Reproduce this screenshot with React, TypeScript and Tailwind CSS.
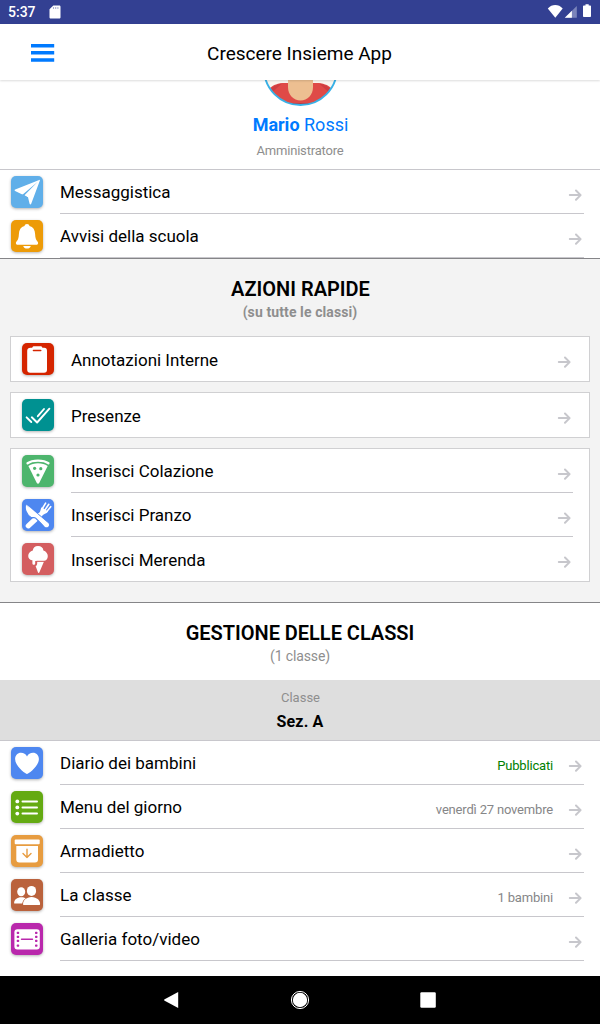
import type { ReactNode } from "react";

const W = "#fff";

const plane = (
  <>
    <path d="M28.200 3.900c.4-.2.800.1.700.6L20.200 27.800c-.4 1-1.300.9-1.600-.1L17 21.300 4.100 14.900c-.8-.4-.7-1.100.1-1.400z" fill={W} />
    <path d="M26.800 5.800 13.500 19.300l3.600 2.200-.8 2-6.300-4.300 2-1z" fill="#60afe9" />
    <path d="M27.600 5.400 14.600 19.500l3 1.800z" fill={W} />
  </>
);
const bell = (
  <>
    <path d="M16 4c1.400 0 2.300.9 2.500 2 3.700 1 5.500 3.900 5.600 8 .2 4.200.9 5.600 2 7 .9 1 1 1.500 1 2.300 0 .9-.7 1.500-1.700 1.500H6.600c-1 0-1.700-.6-1.700-1.500 0-.8.1-1.300 1-2.300 1.100-1.400 1.800-2.800 2-7 .1-4.100 1.900-7 5.600-8C13.700 4.900 14.600 4 16 4z" fill={W} />
    <path d="M12.200 26h7.600c-.4 1.700-2 2.600-3.800 2.600s-3.400-.9-3.800-2.600z" fill={W} />
  </>
);
const clipboard = (
  <>
    <path d="M8.500 4.700h1.700C10.600 3.800 11.300 3.300 12.300 3.300h6c1 0 1.700.5 2.100 1.400h1.700c2 0 2.900 1 2.900 3v19c0 2-1 3-3 3H8.200c-2 0-3-1-3-3v-19c0-2 1.300-3 3.300-3z" fill={W} />
    <path d="M11.400 7.500h7.400" stroke="#d52500" strokeWidth="1.400" strokeLinecap="round" />
  </>
);
const checks = (
  <path d="M4.600 18.300 9.300 23M9.800 18.300l5.300 5.200L27.400 9.700M15.800 17.200 22 10" fill="none" stroke={W} strokeWidth="1.900" strokeLinecap="round" strokeLinejoin="round" />
);
const pizza = (
  <>
    <path d="M5.600 8.300C8.400 6.200 12 5.600 16 5.600s7.600.6 10.400 2.700" fill="none" stroke={W} strokeWidth="2.400" strokeLinecap="round" />
    <path d="M6.400 11C9.200 9 12.200 8.200 16 8.200s6.900.8 9.700 2.800l-8.500 17c-.5 1-1.900 1-2.400 0z" fill={W} />
    <circle cx="12.600" cy="13.300" r="1.600" fill="#4db56d" />
    <circle cx="18.800" cy="13.700" r="1.600" fill="#4db56d" />
    <circle cx="16" cy="20" r="1.600" fill="#4db56d" />
  </>
);
const cutlery = (
  <>
    <path d="M17.500 16.500 6.300 26.800" stroke={W} strokeWidth="5.200" strokeLinecap="round" />
    <path d="m20.400 9.500 3.200-5.300M23 11l3.800-5.700M24.800 12.600l3.900-4.900" stroke={W} strokeWidth="1.600" strokeLinecap="round" />
    <path d="M16.500 14.500c2.400-1.500 1.600-4 3.200-6.200l6.300 4.200c-1.600 2.500-4.200 2.200-6.500 4.800z" fill={W} />
    <path d="M3.700 4.900c-1.500 5 .7 10.800 5.300 13.600 1.500.7 3.200-.5 4.600.6l9 8.900c2.900 2 6-.9 4.200-3.900z" fill={W} stroke="#4e87f0" strokeWidth="1.200" strokeLinejoin="round" />
    <path d="M4.200 5.200 26.500 24.400c1.400 2.800-1.400 5-3.700 3.400" fill={W} />
  </>
);
const iceCream = (
  <>
    <path d="M16 3.100c-3.100 0-5 2-5.200 4.300C8.300 8 6.200 10.100 6.200 12.900c0 2.400 2 4.400 4.200 4.400v2.900c0 2.100 2.800 2.100 2.800 0v-2.300h8.600c2.400 0 4-2 4-4.800 0-2.500-1.800-5.100-4.400-5.700C21.200 5 19.100 3.100 16 3.100z" fill={W} />
    <path d="M15.200 18.700h6.700l-4.500 10.500c-.4.900-1.200.9-1.500 0l-2.300-6.100c1.100-.5 1.600-1.600 1.600-2.900z" fill={W} />
    <path d="M14.500 18.200h8" stroke="#d45e60" strokeWidth=".7" />
  </>
);
const heart = (
  <path d="M16 27c-1 0-11.900-7.400-11.900-15 0-3.600 2.600-6.200 5.900-6.200 2.700 0 4.800 1.300 6 3.600 1.200-2.300 3.300-3.600 6-3.600 3.300 0 5.900 2.600 5.900 6.200C27.900 19.600 17 27 16 27z" fill={W} />
);
const list = (
  <>
    {[10.400, 16.400, 22.600].map((y) => (
      <g key={y} fill={W}>
        <circle cx="6.300" cy={y} r="1.900" />
        <rect x="10.500" y={y - 1} width="16.500" height="2" rx="1" />
      </g>
    ))}
  </>
);
const archive = (
  <>
    <rect x="3.700" y="4.600" width="25" height="4.600" rx="1" fill={W} />
    <path d="M5.300 11H27v13.500c0 2-1 3-3 3H8.300c-2 0-3-1-3-3z" fill={W} />
    <path d="M16 14.200v8.300m-4-3.900 4 4 4-4" fill="none" stroke="#e79c40" strokeWidth="1.400" strokeLinecap="round" strokeLinejoin="round" />
  </>
);
const people = (
  <>
    <ellipse cx="10.200" cy="12.700" rx="4" ry="4.500" fill={W} />
    <path d="M3.200 24.400c-.5-3.800 3.200-6.200 7-6.200 2 0 3.500.4 4.600 1.100-2 1.300-3.300 3.100-3.600 5.100z" fill={W} />
    <ellipse cx="20.500" cy="11.900" rx="4.600" ry="5" fill={W} />
    <path d="M12.200 25.900c-1-4.200 3.300-7.900 8.400-7.900s9.300 3.700 8.300 7.900z" fill={W} />
  </>
);
const film = (
  <>
    <rect x="3.400" y="6.200" width="25.400" height="20.200" rx="3" fill={W} />
    <path d="M10.500 16.300h11" stroke="#b928ac" strokeWidth="1.400" strokeLinecap="round" />
    {[9, 13, 17, 21.800].map((y) => (
      <g key={y} fill="#b928ac">
        <rect x="5.700" y={y - 0.300} width="2.500" height="2.300" rx=".7" />
        <rect x="24" y={y - 0.300} width="2.500" height="2.300" rx=".7" />
      </g>
    ))}
  </>
);

type RowProps = {
  tile: string;
  icon: ReactNode;
  label: string;
  after?: string;
  afterClass?: string;
  line?: boolean;
  low?: boolean;
};

function Row({ tile, icon, label, after, afterClass = "text-[#868688]", line = true, low }: RowProps) {
  return (
    <li className="flex h-11 pl-[11px]">
      <span className={`mt-1.5 size-8 shrink-0 rounded-[5px] shadow-[0_1px_3px_rgba(0,0,0,0.3)] ${tile}`}>
        <svg viewBox="0 0 32 32" className="size-8">{icon}</svg>
      </span>
      <div className={`mr-4 ml-[17px] flex flex-1 justify-between border-b ${line ? "border-[#c8c7cc]" : "border-transparent"}`}>
        <span className={`text-[17px] leading-6 ${low ? "pt-[11px]" : "pt-2.5"}`}>{label}</span>
        <span className="flex">
          {after && <span className={`pt-[15px] text-[13px] leading-5 tracking-[-0.18px] ${afterClass}`}>{after}</span>}
          <svg viewBox="0 0 14 14" className="mr-0.5 ml-[15px] mt-[18px] h-3.5 w-3.5" fill="none" stroke="#c7c7cc" strokeWidth="2" strokeLinecap="round" strokeLinejoin="round">
            <path d="M1.800 7.100h10.500M8 2.500l4.600 4.600L8 11.700" />
          </svg>
        </span>
      </div>
    </li>
  );
}

function Card({ children }: { children: ReactNode }) {
  return <ul className="border border-[#d0d0d2] bg-white">{children}</ul>;
}

export default function App() {
  return (
    <div className="flex h-[1024px] w-[600px] flex-col overflow-hidden bg-white font-['Roboto',sans-serif] text-black">
      <div className="flex h-6 shrink-0 items-center justify-between bg-[#334092] pr-[7px] pl-2 text-white">
        <div className="flex items-center">
          <span className="text-[14px] leading-6 font-medium">5:37</span>
          <svg width="12" height="14" viewBox="0 0 12 14" className="ml-[13px]">
            <path d="M4.300.5h5.900c.8 0 1.300.5 1.300 1.300v10.400c0 .8-.5 1.300-1.300 1.300H1.800c-.8 0-1.300-.5-1.300-1.300V4.300z" fill={W} />
            <path d="M4.500 2.300v1.500M6.700 2.300v1.500M8.900 2.300v1.500" stroke="#8d95c3" strokeWidth="1.100" />
          </svg>
        </div>
        <svg width="46" height="16" viewBox="0 0 46 16">
          <path d="M.8 4.500C5-.1 11.500-.1 15.700 4.500L8.300 13.700z" fill={W} />
          <path d="M17.800 13.800 29.800 2v11.800z" fill="#7b84bb" />
          <path d="M17.800 13.800 24.900 6.700v7.100z" fill={W} />
          <path d="M38.500.2h3.200v1.300h1.500c.5 0 .8.300.8.8v9.900c0 .5-.3.800-.8.800h-6.400c-.5 0-.8-.3-.8-.8V2.300c0-.5.3-.8.8-.8h1.700z" fill={W} />
        </svg>
      </div>

      <header className="z-10 grid h-14 shrink-0 grid-cols-[84px_1fr_84px] items-center bg-white shadow-[0_1px_2px_rgba(0,0,0,0.14)]">
        <button aria-label="Menu" className="mt-[2px] ml-[31px]">
          <svg width="24" height="18" viewBox="0 0 24 18" fill="#007aff">
            <path d="M0 0h23.200v3.500H0zM0 7.100h23.200v3.500H0zM0 14.200h23.200v3.500H0z" />
          </svg>
        </button>
        <h1 className="pt-[3px] pr-px text-center text-[19px] leading-6">Crescere Insieme App</h1>
      </header>

      <section className="flex h-[90px] shrink-0 flex-col items-center border-b border-[#c8c7cc]">
        <svg width="80" height="27" viewBox="0 50 80 27" className="shrink-0">
          <clipPath id="face"><circle cx="40.500" cy="38.500" r="36.500" /></clipPath>
          <g clipPath="url(#face)">
            <path d="M0 0h80v80H0z" fill="#faf6ef" />
            <path d="M10 58c3-3 8-5 15-5h31c7 0 12 2 15 5v15H10z" fill="#df4a47" />
            <path d="M10 60c3-4 7-6 12-6.500l-9 8zM71 60c-3-4-7-6-12-6.500l9 8z" fill="#cf3e40" />
            <path d="M28 48h25v9c0 8-5.500 13.500-12.500 13.500S28 65 28 57z" fill="#edbf91" />
            <path d="M20 73h41v4H20z" fill="#b73c45" />
          </g>
          <circle cx="40.500" cy="38.500" r="36.500" fill="none" stroke="#38b1e7" strokeWidth="1.900" />
        </svg>
        <p className="mt-[6px] pl-px text-[18px] leading-6 text-[#007aff]"><b className="font-bold">Mario</b> Rossi</p>
        <p className="mt-[4px] text-[13px] leading-5 tracking-[-0.18px] text-[#8e8e8e]">Amministratore</p>
      </section>

      <ul className="h-[88px] shrink-0">
        <Row tile="bg-[#60afe9]" icon={plane} label="Messaggistica" />
        <Row tile="bg-[#ed9b08]" icon={bell} label="Avvisi della scuola" />
      </ul>

      <section className="flex h-[345px] shrink-0 flex-col border-y border-[#858588] bg-[#f3f3f3] px-2.5">
        <h2 className="mt-[18px] pl-px text-center text-[20px] leading-6 font-semibold">AZIONI RAPIDE</h2>
        <p className="mt-px text-center text-[14px] leading-5 font-bold tracking-[0.1px] text-[#8e8e8e]">(su tutte le classi)</p>
        <div className="mt-[14px] flex flex-col gap-2.5">
          <Card><Row low line={false} tile="bg-[#d52500]" icon={clipboard} label="Annotazioni Interne" /></Card>
          <Card><Row low line={false} tile="bg-[#009191]" icon={checks} label="Presenze" /></Card>
          <Card>
            <Row tile="bg-[#4db56d]" icon={pizza} label="Inserisci Colazione" />
            <Row tile="bg-[#4e87f0]" icon={cutlery} label="Inserisci Pranzo" />
            <Row low line={false} tile="bg-[#d45e60]" icon={iceCream} label="Inserisci Merenda" />
          </Card>
        </div>
      </section>

      <section className="shrink-0">
        <div className="h-[77px] pt-[18px] text-center">
          <h2 className="text-[20px] leading-6 font-semibold tracking-[-0.03px]">GESTIONE DELLE CLASSI</h2>
          <p className="mt-px text-[14px] leading-5 tracking-[-0.12px] text-[#8e8e8e]">(1 classe)</p>
        </div>
        <div className="h-[61px] border-b border-[#c8c7cc] bg-[#dedede] pt-2 text-center">
          <p className="pl-px text-[13px] leading-5 text-[#8e8e8e]">Classe</p>
          <p className="mt-[2px] text-[16px] leading-6 font-bold tracking-[0.15px]">Sez. A</p>
        </div>
        <ul>
          <Row tile="bg-[#4e87f0]" icon={heart} label="Diario dei bambini" after="Pubblicati" afterClass="text-[#008000]" />
          <Row tile="bg-[#64aa12]" icon={list} label="Menu del giorno" after="venerdì 27 novembre" />
          <Row tile="bg-[#e79c40]" icon={archive} label="Armadietto" />
          <Row tile="bg-[#ba623c]" icon={people} label="La classe" after="1 bambini" />
          <Row tile="bg-[#b928ac]" icon={film} label="Galleria foto/video" />
        </ul>
      </section>

      <nav className="mt-auto flex h-12 shrink-0 items-center justify-center gap-[104px] bg-black">
        <svg width="24" height="24" viewBox="0 0 24 24"><path d="M18.200 4v16L4.200 12.500v-1z" fill={W} /></svg>
        <svg width="24" height="24" viewBox="0 0 24 24"><circle cx="12" cy="12" r="7.200" fill={W} /><circle cx="12" cy="12" r="8.600" fill="none" stroke={W} strokeWidth="1" /></svg>
        <svg width="24" height="24" viewBox="0 0 24 24"><rect x="4.300" y="4.300" width="15.500" height="15.500" rx="1.200" fill={W} /></svg>
      </nav>
    </div>
  );
}
